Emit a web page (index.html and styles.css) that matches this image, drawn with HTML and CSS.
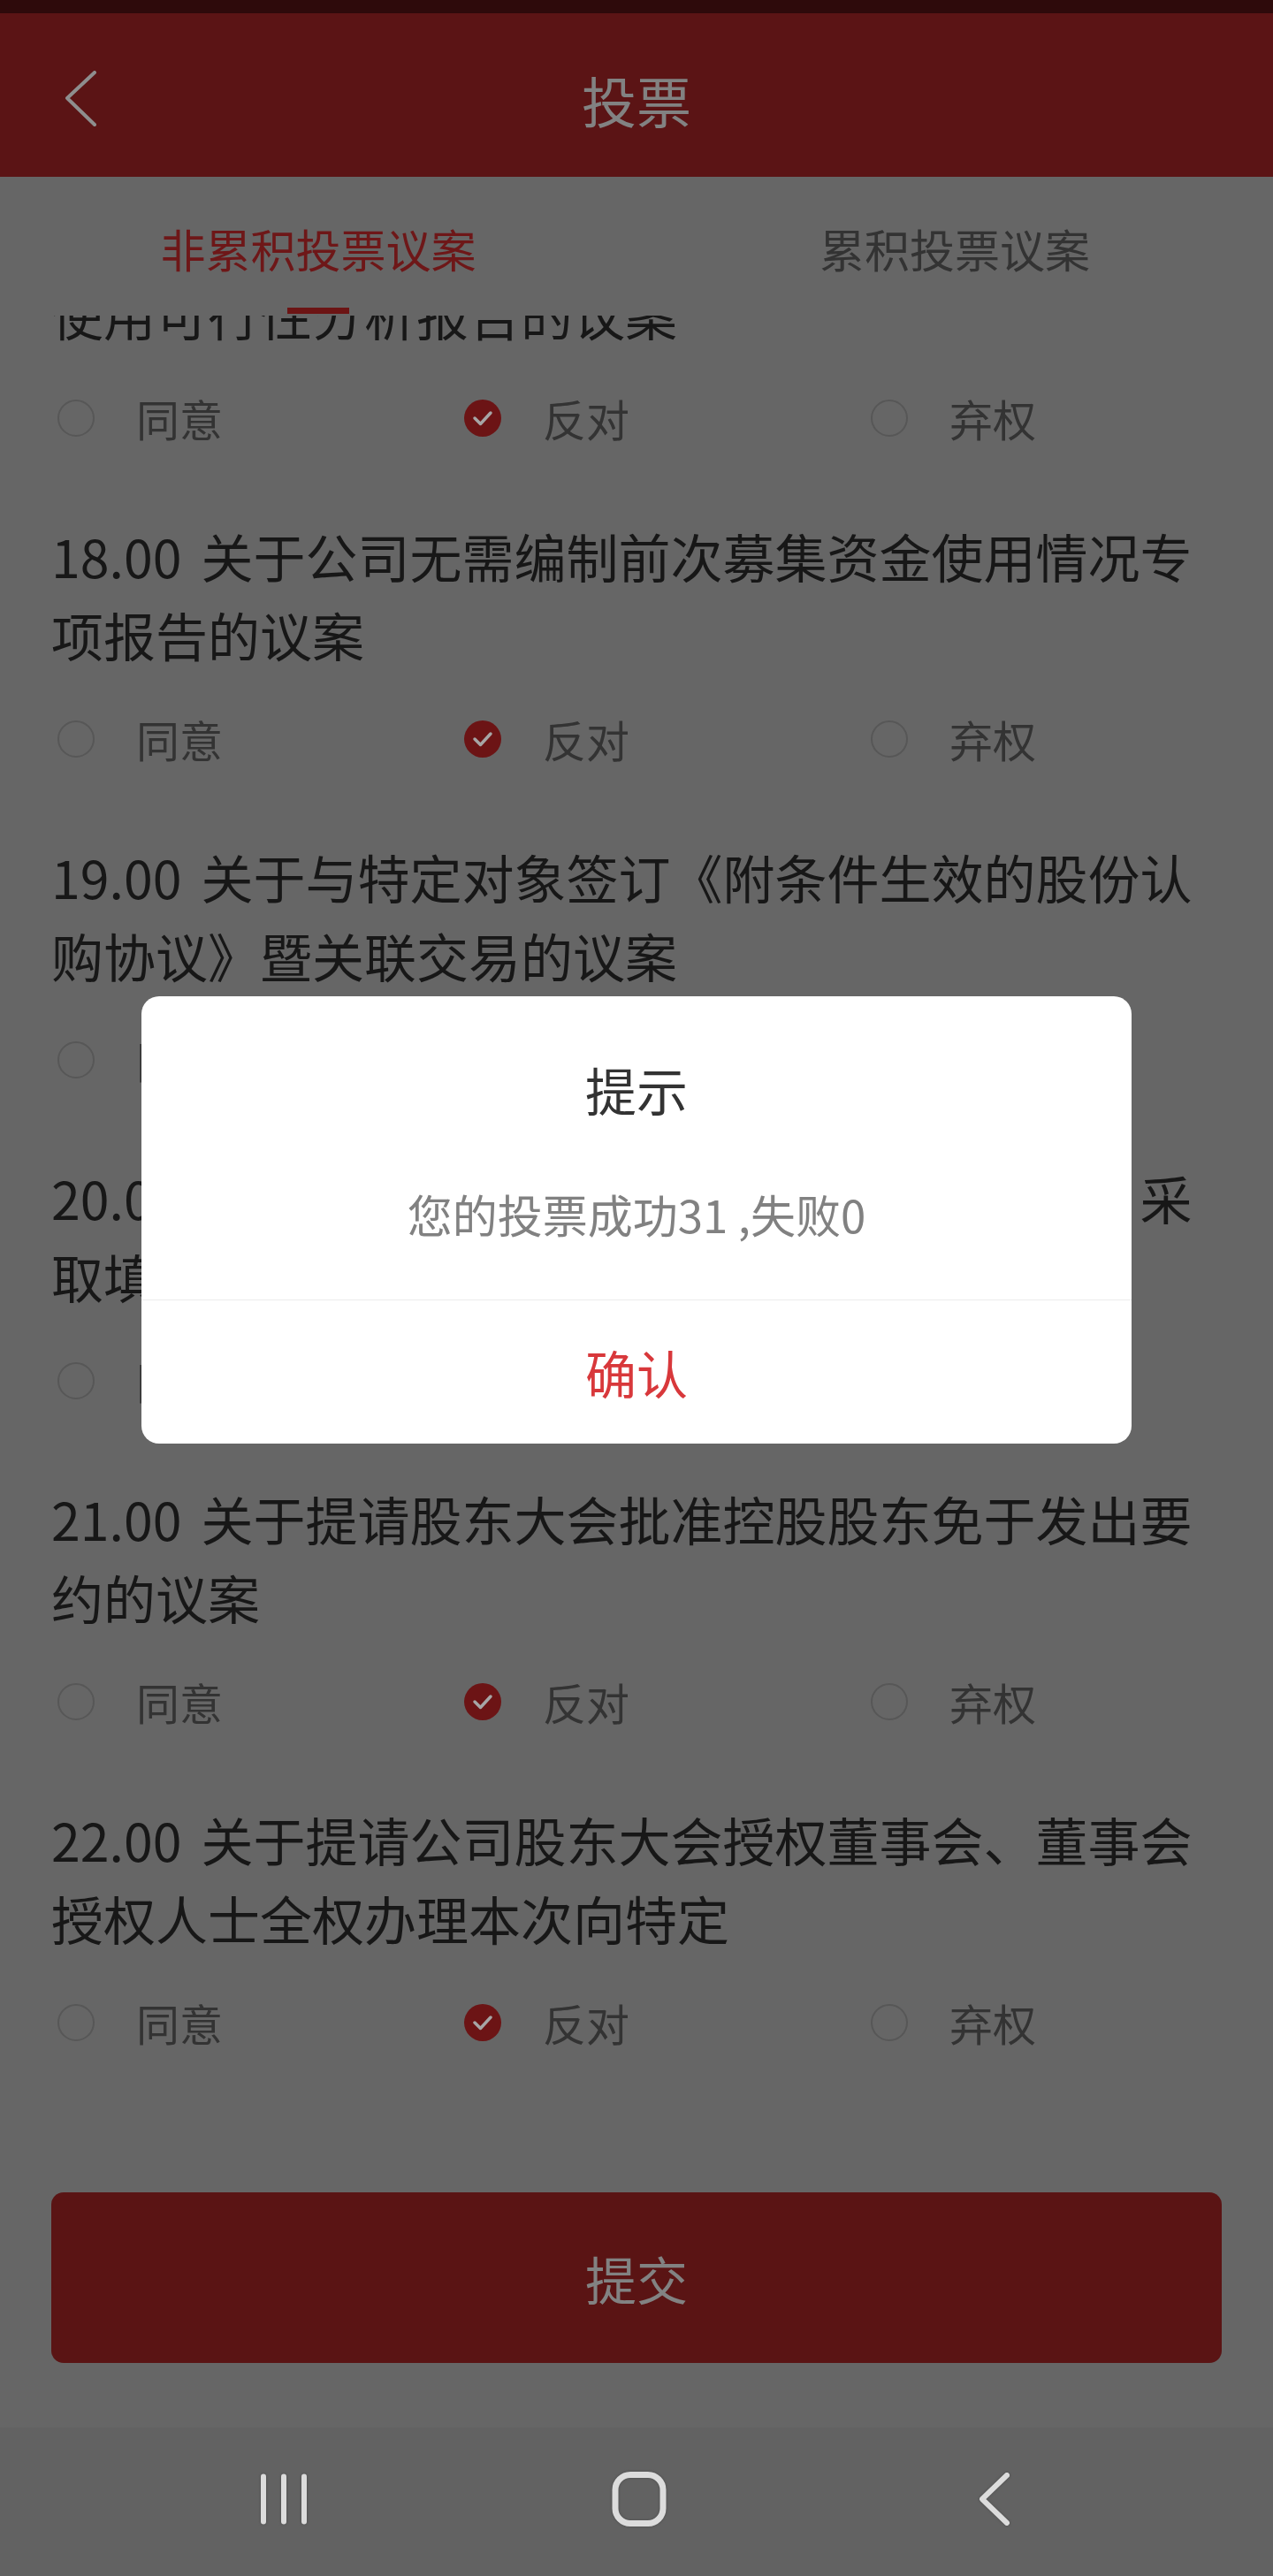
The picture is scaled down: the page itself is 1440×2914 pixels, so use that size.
FILE: index.html
```html
<!DOCTYPE html>
<html lang="zh-CN">
<head>
<meta charset="utf-8">
<title>投票</title>
<link rel="stylesheet" href="styles.css">
</head>
<body>
<div class="screen">
  <div class="statusbar"></div>
  <div class="header">
    <div class="back">
      <svg width="40" height="64" viewBox="0 0 40 64"><polyline points="35,2 4,31 35,61" fill="none" stroke="#8e8e8e" stroke-width="4" stroke-linecap="round" stroke-linejoin="round"/></svg>
    </div>
    <div class="title">投票</div>
    <div></div>
  </div>
  <div class="tabs">
    <div class="tab active"><span class="tabtext">非累积投票议案</span><span class="underline"></span></div>
    <div class="tab"><span class="tabtext">累积投票议案</span><span class="underline"></span></div>
  </div>

  <div class="list">
    <div class="listinner">
      <div class="item">
        <div class="itemtext">17.00 关于公司本次向特定对象发行股票募集资金使用可行性分析报告的议案</div>
        <div class="options">
          <div class="opt"><span class="radio"></span><span class="label">同意</span></div>
          <div class="opt"><span class="radio checked"><svg width="42" height="42" viewBox="0 0 42 42"><polyline points="12,21 18.5,27.5 30,15" fill="none" stroke="#a6a6a6" stroke-width="3.5" stroke-linecap="round" stroke-linejoin="round"/></svg></span><span class="label">反对</span></div>
          <div class="opt"><span class="radio"></span><span class="label">弃权</span></div>
        </div>
      </div>
      <div class="item">
        <div class="itemtext">18.00 关于公司无需编制前次募集资金使用情况专项报告的议案</div>
        <div class="options">
          <div class="opt"><span class="radio"></span><span class="label">同意</span></div>
          <div class="opt"><span class="radio checked"><svg width="42" height="42" viewBox="0 0 42 42"><polyline points="12,21 18.5,27.5 30,15" fill="none" stroke="#a6a6a6" stroke-width="3.5" stroke-linecap="round" stroke-linejoin="round"/></svg></span><span class="label">反对</span></div>
          <div class="opt"><span class="radio"></span><span class="label">弃权</span></div>
        </div>
      </div>
      <div class="item">
        <div class="itemtext">19.00 关于与特定对象签订《附条件生效的股份认购协议》暨关联交易的议案</div>
        <div class="options">
          <div class="opt"><span class="radio"></span><span class="label">同意</span></div>
          <div class="opt"><span class="radio checked"><svg width="42" height="42" viewBox="0 0 42 42"><polyline points="12,21 18.5,27.5 30,15" fill="none" stroke="#a6a6a6" stroke-width="3.5" stroke-linecap="round" stroke-linejoin="round"/></svg></span><span class="label">反对</span></div>
          <div class="opt"><span class="radio"></span><span class="label">弃权</span></div>
        </div>
      </div>
      <div class="item">
        <div class="itemtext">20.00 关于向特定对象发行股票摊薄即期回报、采取填补措施及相关主体承诺的议案</div>
        <div class="options">
          <div class="opt"><span class="radio"></span><span class="label">同意</span></div>
          <div class="opt"><span class="radio checked"><svg width="42" height="42" viewBox="0 0 42 42"><polyline points="12,21 18.5,27.5 30,15" fill="none" stroke="#a6a6a6" stroke-width="3.5" stroke-linecap="round" stroke-linejoin="round"/></svg></span><span class="label">反对</span></div>
          <div class="opt"><span class="radio"></span><span class="label">弃权</span></div>
        </div>
      </div>
      <div class="item">
        <div class="itemtext">21.00 关于提请股东大会批准控股股东免于发出要约的议案</div>
        <div class="options">
          <div class="opt"><span class="radio"></span><span class="label">同意</span></div>
          <div class="opt"><span class="radio checked"><svg width="42" height="42" viewBox="0 0 42 42"><polyline points="12,21 18.5,27.5 30,15" fill="none" stroke="#a6a6a6" stroke-width="3.5" stroke-linecap="round" stroke-linejoin="round"/></svg></span><span class="label">反对</span></div>
          <div class="opt"><span class="radio"></span><span class="label">弃权</span></div>
        </div>
      </div>
      <div class="item">
        <div class="itemtext">22.00 关于提请公司股东大会授权董事会、董事会授权人士全权办理本次向特定</div>
        <div class="options">
          <div class="opt"><span class="radio"></span><span class="label">同意</span></div>
          <div class="opt"><span class="radio checked"><svg width="42" height="42" viewBox="0 0 42 42"><polyline points="12,21 18.5,27.5 30,15" fill="none" stroke="#a6a6a6" stroke-width="3.5" stroke-linecap="round" stroke-linejoin="round"/></svg></span><span class="label">反对</span></div>
          <div class="opt"><span class="radio"></span><span class="label">弃权</span></div>
        </div>
      </div>
    </div>
  </div>

  <div class="footer">
    <div class="submit">提交</div>
  </div>

  <div class="navbar">
    <div class="navcell">
      <svg width="58" height="60" viewBox="0 0 58 60"><rect x="3" y="1.5" width="6" height="57" rx="3" fill="#dcdcdc"/><rect x="26" y="1.5" width="6" height="57" rx="3" fill="#dcdcdc"/><rect x="49" y="1.5" width="6" height="57" rx="3" fill="#dcdcdc"/></svg>
    </div>
    <div class="navcell">
      <svg width="64" height="64" viewBox="0 0 64 64"><rect x="5" y="4.5" width="54" height="55" rx="17" fill="none" stroke="#dcdcdc" stroke-width="7"/></svg>
    </div>
    <div class="navcell">
      <svg width="40" height="62" viewBox="0 0 40 62"><polyline points="34,4 6,31 34,58" fill="none" stroke="#dcdcdc" stroke-width="6" stroke-linecap="round" stroke-linejoin="round"/></svg>
    </div>
  </div>

  <div class="dialog">
    <div class="dialogbody">
      <div class="dialogtitle">提示</div>
      <div class="dialogmsg">您的投票成功31 ,失败0</div>
    </div>
    <div class="dialogbtn">确认</div>
  </div>
</div>
</body>
</html>
```
FILE: styles.css
```css
body
{
	margin: 0;
	background-color: #666666;
	font-family: "Noto Sans CJK SC", "Noto Sans", sans-serif;
}
.screen
{
	position: relative;
	width: 1440px;
	height: 2914px;
	display: flex;
	flex-direction: column;
	background-color: #666666;
	overflow: hidden;
}
.statusbar
{
	height: 15px;
	background-color: #2e0a0b;
}
.header
{
	height: 185px;
	background-color: #5b1415;
	display: grid;
	grid-template-columns: 1fr auto 1fr;
	align-items: center;
}
.back
{
	padding-left: 72px;
	padding-top: 8px;
}
.back svg
{
	display: block;
}
.title
{
	color: #828282;
	font-size: 62px;
	line-height: 80px;
	padding-top: 10px;
}
.tabs
{
	height: 157px;
	display: flex;
}
.tab
{
	flex: 1;
	display: flex;
	flex-direction: column;
	align-items: center;
	padding-top: 46px;
	box-sizing: border-box;
}
.tabtext
{
	font-size: 51px;
	line-height: 70px;
	color: #333333;
}
.tab.active .tabtext
{
	color: #6e1718;
}
.underline
{
	width: 70px;
	height: 7px;
	margin-top: 32px;
}
.tab.active .underline
{
	background-color: #6c1414;
}
.list
{
	flex: 1;
	overflow: hidden;
}
.listinner
{
	margin-top: -182px;
}
.item
{
	padding: 46px 58px 47px 58px;
}
.itemtext
{
	font-size: 59px;
	line-height: 89px;
	color: #171717;
	word-spacing: 9px;
}
.options
{
	display: grid;
	grid-template-columns: 460px 460px 460px;
	height: 48px;
	margin-top: 44px;
	padding-left: 7px;
	align-items: center;
}
.opt
{
	display: flex;
	align-items: center;
}
.radio
{
	width: 42px;
	height: 42px;
	box-sizing: border-box;
	border: 2.5px solid #575757;
	border-radius: 50%;
	flex: none;
}
.radio.checked
{
	border: none;
	background-color: #6c1415;
}
.radio svg
{
	display: block;
}
.label
{
	margin-left: 47px;
	font-size: 49px;
	line-height: 60px;
	color: #333333;
}
.footer
{
	padding: 40px 58px 73px 58px;
}
.submit
{
	height: 193px;
	border-radius: 14px;
	background-color: #5a1414;
	color: #828282;
	font-size: 58px;
	display: flex;
	align-items: center;
	justify-content: center;
}
.navbar
{
	height: 168px;
	background-color: #626262;
	display: flex;
	justify-content: center;
	align-items: center;
	padding-left: 6px;
	padding-bottom: 6px;
	box-sizing: border-box;
}
.navcell
{
	width: 402px;
	display: flex;
	justify-content: center;
}
.navcell svg
{
	display: block;
	filter: drop-shadow(0 0 1.5px #4a4a4a);
}
.dialog
{
	position: absolute;
	top: 1127px;
	left: 160px;
	width: 1120px;
	background-color: #fff;
	border-radius: 20px;
	overflow: hidden;
}
.dialogbody
{
	padding: 65px 40px 62px 40px;
	text-align: center;
	border-bottom: 1px solid #ececec;
}
.dialogtitle
{
	font-size: 58px;
	line-height: 80px;
	color: #333333;
}
.dialogmsg
{
	margin-top: 66px;
	font-size: 51px;
	line-height: 70px;
	color: #818181;
}
.dialogbtn
{
	height: 162px;
	display: flex;
	align-items: center;
	justify-content: center;
	font-size: 58px;
	color: #d8383b;
}
```
